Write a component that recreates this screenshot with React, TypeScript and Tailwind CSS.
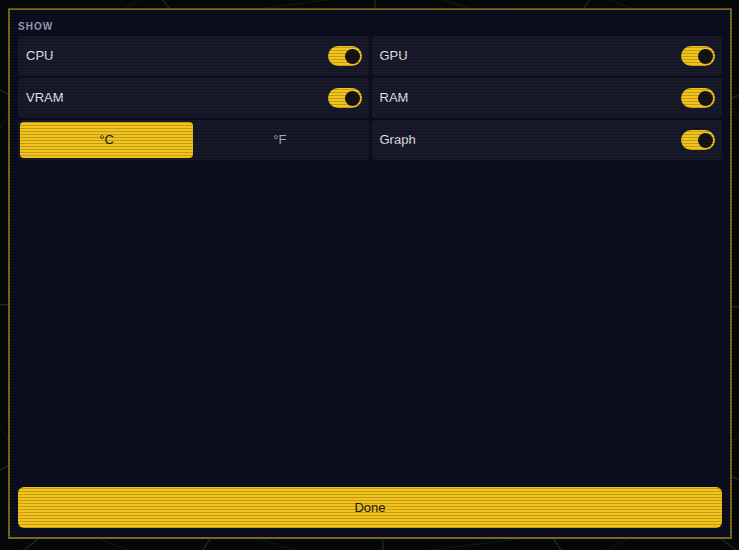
import React from "react";

const rays: [number, number][] = [
  [163, 0], [375, 0], [590, 0],
  [24, 550], [203, 550], [383, 550], [561, 550], [736, 550],
  [0, 305], [739, 307], [0, 90], [739, 95], [0, 470], [739, 480],
];

function Web() {
  const cx = 372;
  const cy = 276;
  const rings = [300, 360, 430];
  return (
    <svg className="absolute inset-0" width="739" height="550" viewBox="0 0 739 550">
      {rays.map(([x, y], i) => (
        <line key={i} x1={cx} y1={cy} x2={x} y2={y} stroke="#1f5a34" strokeOpacity="0.5" strokeWidth="1.5" />
      ))}
      {rings.map((r, i) => (
        <polygon
          key={i}
          points={Array.from({ length: 12 }, (_, k) => {
            const a = (k / 12) * Math.PI * 2 + i * 0.1;
            return `${cx + Math.cos(a) * r},${cy + Math.sin(a) * r * 0.8}`;
          }).join(" ")}
          fill="none"
          stroke="#1a4a2c"
          strokeOpacity="0.35"
          strokeWidth="1"
        />
      ))}
    </svg>
  );
}

function Toggle() {
  return (
    <div className="flex h-[20px] w-[34px] items-center justify-end rounded-full bg-[#f2c31b] pr-[2px]">
      <div className="h-[15px] w-[15px] rounded-full bg-[#141414]" />
    </div>
  );
}

function Row({ label }: { label: string }) {
  return (
    <div className="flex h-[40px] items-center justify-between rounded-[4px] bg-[#181a2b] pl-[8px] pr-[7px]">
      <span className="text-[13px] text-[#e4e4ea]">{label}</span>
      <Toggle />
    </div>
  );
}

export default function App() {
  return (
    <div className="relative h-[550px] w-[739px] overflow-hidden bg-[#060708] font-['Liberation_Sans',Arial,sans-serif]">
      <Web />
      <div className="relative flex h-full w-full pb-[11px] pl-[8px] pr-[7px] pt-[8px]">
        <div className="flex flex-1 flex-col border-2 border-[#7d6718] bg-[#0c0e20] px-[8px] pb-[9px] pt-[10px]">
          <div className="h-[14px] text-[10px] font-bold uppercase leading-[14px] tracking-[0.1em] text-[#9d9fbb]">
            Show
          </div>
          <div className="mt-[2px] grid grid-cols-2 gap-x-[3px] gap-y-[2px]">
            <Row label="CPU" />
            <Row label="GPU" />
            <Row label="VRAM" />
            <Row label="RAM" />
            <div className="grid h-[40px] grid-cols-2 rounded-[4px] bg-[#171929] p-[2px]">
              <button className="rounded-[4px] bg-[#f2c31b] text-[13px] text-[#1a1a1a]">°C</button>
              <button className="text-[13px] text-[#a3a5b8]">°F</button>
            </div>
            <Row label="Graph" />
          </div>
          <button className="mt-auto h-[41px] w-full rounded-[6px] bg-[#f2c31b] text-[13px] text-[#1a1a1a]">
            Done
          </button>
        </div>
      </div>
      <div className="pointer-events-none absolute inset-0 bg-[repeating-linear-gradient(to_bottom,transparent_0px,transparent_2px,rgba(0,0,0,0.2)_2px,rgba(0,0,0,0.2)_3px)]" />
    </div>
  );
}
